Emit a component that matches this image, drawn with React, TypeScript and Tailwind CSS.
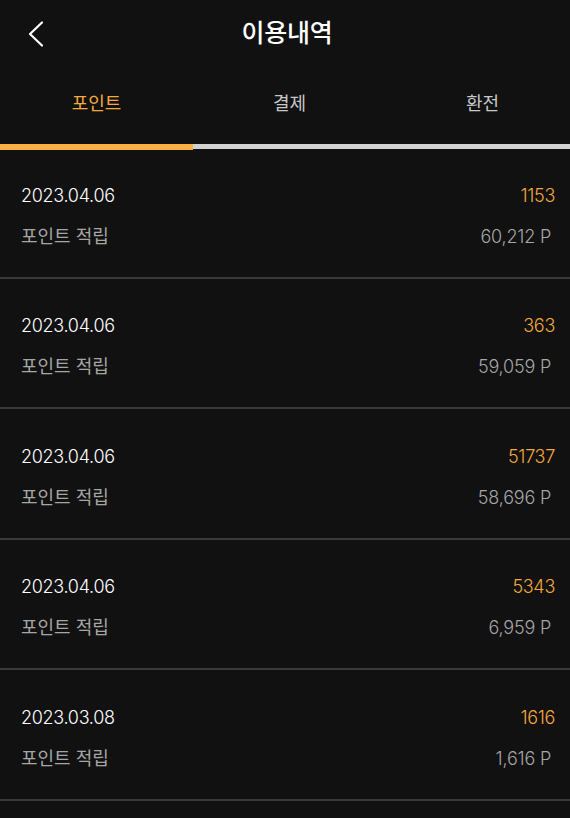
const font = { fontFamily: 'Inter, "Noto Sans CJK KR", sans-serif' };

type Entry = { date: string; amount: string; total: string };

const entries: Entry[] = [
  { date: "2023.04.06", amount: "1153", total: "60,212 P" },
  { date: "2023.04.06", amount: "363", total: "59,059 P" },
  { date: "2023.04.06", amount: "51737", total: "58,696 P" },
  { date: "2023.04.06", amount: "5343", total: "6,959 P" },
  { date: "2023.03.08", amount: "1616", total: "1,616 P" },
];

const tabs = ["포인트", "결제", "환전"];

export default function App() {
  return (
    <div className="w-[570px] h-[818px] overflow-hidden bg-[#111111] text-white" style={font}>
      <header className="relative flex h-[68px] items-center justify-center">
        <button type="button" className="absolute left-[26px] top-[19px] p-0" aria-label="뒤로">
          <svg width="20" height="30" viewBox="0 0 20 30" fill="none">
            <path d="M16 3.5 L4 15 L16 26.5" stroke="#ffffff" strokeWidth="2.2" strokeLinecap="round" strokeLinejoin="round" />
          </svg>
        </button>
        <h1 className="pl-[4px] text-[25px] font-medium tracking-[-0.3px]">이용내역</h1>
      </header>

      {/* tabs are 193px each, the last one runs a little past the edge */}
      <nav className="flex h-[76px] items-center">
        {tabs.map((t, i) => (
          <div
            key={t}
            className={
              "w-[193px] shrink-0 pb-[6px] text-center text-[18px] " +
              (i === 0 ? "text-[#f5a83d]" : "text-[#c8c8c8]")
            }
          >
            {t}
          </div>
        ))}
      </nav>
      <div className="relative z-10 flex h-[6px] items-start">
        <div className="h-[6px] w-[193px] bg-[#fbb042]" />
        <div className="h-[5px] flex-1 bg-[#d2d2d2]" />
      </div>

      <ul className="-mt-[2px]">
        {entries.map((e, i) => (
          <li key={i} className="flex h-[130.5px] flex-col justify-center border-b-2 border-[#3a3a3a] pl-[21px] pr-[15px] pt-[7px]">
            <div className="flex items-center justify-between">
              <span className="text-[18px] font-light tracking-[-0.3px]">{e.date}</span>
              <span className="text-[18px] font-light tracking-[-0.3px] text-[#f5a83d]">{e.amount}</span>
            </div>
            <div className="mt-[14px] flex items-center justify-between">
              <span className="text-[18px] text-[#a6a6a6]">포인트 적립</span>
              <span className="pr-[4px] text-[18px] font-light tracking-[-0.2px] text-[#a6a6a6]">{e.total}</span>
            </div>
          </li>
        ))}
      </ul>
    </div>
  );
}
